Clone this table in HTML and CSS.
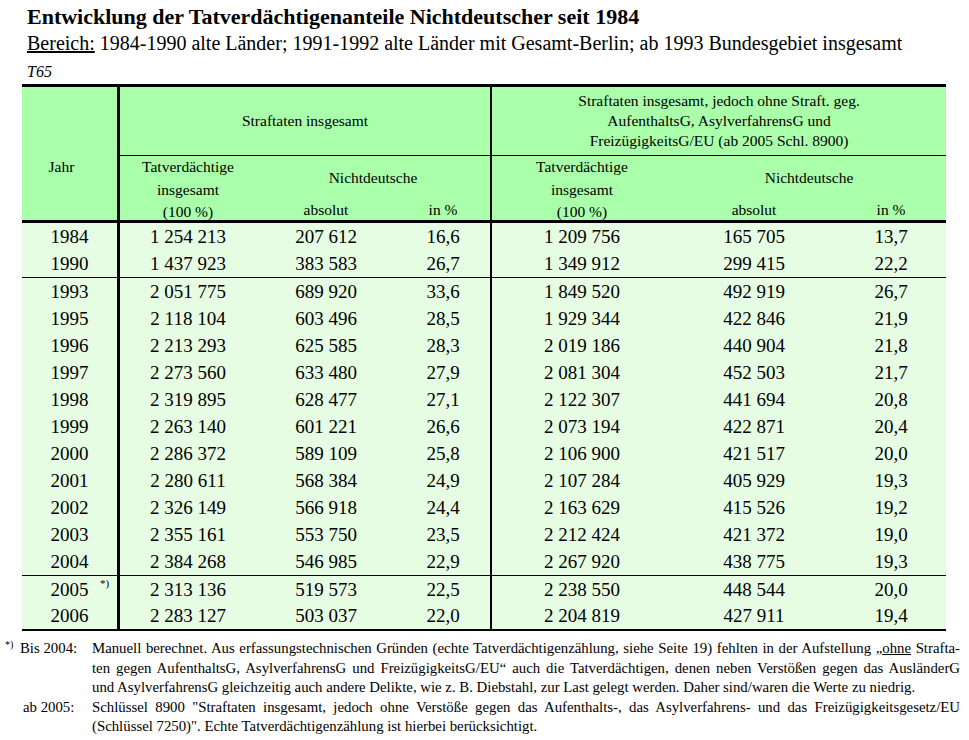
FILE: index.html
```html
<!DOCTYPE html>
<html lang="de">
<head>
<meta charset="utf-8">
<title>T65</title>
<link rel="stylesheet" href="styles.css">
</head>
<body>
<div class="page">
  <h1 class="title">Entwicklung der Tatverdächtigenanteile Nichtdeutscher seit 1984</h1>
  <p class="range"><span class="u">Bereich:</span> 1984-1990 alte Länder; 1991-1992 alte Länder mit Gesamt-Berlin; ab 1993 Bundesgebiet insgesamt</p>
  <p class="code">T65</p>
  <table class="data">
    <colgroup>
      <col class="c-year"><col class="c-tv1"><col class="c-abs1"><col class="c-pct1"><col class="c-tv2"><col class="c-abs2"><col class="c-pct2">
    </colgroup>
    <thead>
      <tr class="h1">
        <th rowspan="3" class="year-h yr">Jahr</th>
        <th colspan="3" class="grp sep">Straftaten insgesamt</th>
        <th colspan="3" class="grp grp3">Straftaten insgesamt, jedoch ohne Straft. geg.<br>AufenthaltsG, AsylverfahrensG und<br>FreizügigkeitsG/EU (ab 2005 Schl. 8900)</th>
      </tr>
      <tr class="h2">
        <th rowspan="2" class="tv"><div class="tvbox"><span>Tatverdächtige</span><span>insgesamt</span><span>(100 %)</span></div></th>
        <th colspan="2" class="nd sep">Nichtdeutsche</th>
        <th rowspan="2" class="tv"><div class="tvbox"><span>Tatverdächtige</span><span>insgesamt</span><span>(100 %)</span></div></th>
        <th colspan="2" class="nd">Nichtdeutsche</th>
      </tr>
      <tr class="h3">
        <th>absolut</th><th class="sep">in %</th><th>absolut</th><th>in %</th>
      </tr>
    </thead>
    <tbody>
      <tr><td class="yr">1984</td><td>1 254 213</td><td>207 612</td><td class="sep">16,6</td><td>1 209 756</td><td>165 705</td><td>13,7</td></tr>
      <tr class="end"><td class="yr">1990</td><td>1 437 923</td><td>383 583</td><td class="sep">26,7</td><td>1 349 912</td><td>299 415</td><td>22,2</td></tr>
      <tr><td class="yr">1993</td><td>2 051 775</td><td>689 920</td><td class="sep">33,6</td><td>1 849 520</td><td>492 919</td><td>26,7</td></tr>
      <tr><td class="yr">1995</td><td>2 118 104</td><td>603 496</td><td class="sep">28,5</td><td>1 929 344</td><td>422 846</td><td>21,9</td></tr>
      <tr><td class="yr">1996</td><td>2 213 293</td><td>625 585</td><td class="sep">28,3</td><td>2 019 186</td><td>440 904</td><td>21,8</td></tr>
      <tr><td class="yr">1997</td><td>2 273 560</td><td>633 480</td><td class="sep">27,9</td><td>2 081 304</td><td>452 503</td><td>21,7</td></tr>
      <tr><td class="yr">1998</td><td>2 319 895</td><td>628 477</td><td class="sep">27,1</td><td>2 122 307</td><td>441 694</td><td>20,8</td></tr>
      <tr><td class="yr">1999</td><td>2 263 140</td><td>601 221</td><td class="sep">26,6</td><td>2 073 194</td><td>422 871</td><td>20,4</td></tr>
      <tr><td class="yr">2000</td><td>2 286 372</td><td>589 109</td><td class="sep">25,8</td><td>2 106 900</td><td>421 517</td><td>20,0</td></tr>
      <tr><td class="yr">2001</td><td>2 280 611</td><td>568 384</td><td class="sep">24,9</td><td>2 107 284</td><td>405 929</td><td>19,3</td></tr>
      <tr><td class="yr">2002</td><td>2 326 149</td><td>566 918</td><td class="sep">24,4</td><td>2 163 629</td><td>415 526</td><td>19,2</td></tr>
      <tr><td class="yr">2003</td><td>2 355 161</td><td>553 750</td><td class="sep">23,5</td><td>2 212 424</td><td>421 372</td><td>19,0</td></tr>
      <tr class="end"><td class="yr">2004</td><td>2 384 268</td><td>546 985</td><td class="sep">22,9</td><td>2 267 920</td><td>438 775</td><td>19,3</td></tr>
      <tr><td class="yr star-cell">2005<sup class="star">*)</sup></td><td>2 313 136</td><td>519 573</td><td class="sep">22,5</td><td>2 238 550</td><td>448 544</td><td>20,0</td></tr>
      <tr class="last"><td class="yr">2006</td><td>2 283 127</td><td>503 037</td><td class="sep">22,0</td><td>2 204 819</td><td>427 911</td><td>19,4</td></tr>
    </tbody>
  </table>
  <div class="notes">
    <div class="mark"><sup>*)</sup></div>
    <div class="lbl">Bis 2004:</div>
    <div class="txt">
      <div class="jl">Manuell berechnet. Aus erfassungstechnischen Gründen (echte Tatverdächtigenzählung, siehe Seite 19) fehlten in der Aufstellung „<span class="u">ohne</span> Strafta-</div>
      <div class="jl">ten gegen AufenthaltsG, AsylverfahrensG und FreizügigkeitsG/EU“ auch die Tatverdächtigen, denen neben Verstößen gegen das AusländerG</div>
      <div>und AsylverfahrensG gleichzeitig auch andere Delikte, wie z. B. Diebstahl, zur Last gelegt werden. Daher sind/waren die Werte zu niedrig.</div>
    </div>
    <div class="mark"></div>
    <div class="lbl lbl2">ab 2005:</div>
    <div class="txt">
      <div class="jl">Schlüssel 8900 "Straftaten insgesamt, jedoch ohne Verstöße gegen das Aufenthalts-, das Asylverfahrens- und das Freizügigkeitsgesetz/EU</div>
      <div>(Schlüssel 7250)". Echte Tatverdächtigenzählung ist hierbei berücksichtigt.</div>
    </div>
  </div>
</div>
</body>
</html>
```

FILE: styles.css
```css
* { box-sizing: border-box; }
html, body { margin: 0; padding: 0; background: #ffffff; }
body { font-family: "Liberation Serif", "Times New Roman", serif; color: #000000; }
.page { width: 969px; height: 740px; overflow: hidden; }

.title { margin: 5px 0 0 27px; font-size: 22px; font-weight: 700; line-height: 24px; }
.range { margin: 3px 0 0 27px; font-size: 20px; line-height: 22px; }
.u { text-decoration: underline; }
.code { margin: 9px 0 0 27px; font-size: 16px; font-style: italic; line-height: 18px; }

.data { margin: 3px 0 0 22px; width: 924px; table-layout: fixed; border-collapse: separate; border-spacing: 0; }
.c-year { width: 98px; }
.c-tv1 { width: 136px; }
.c-abs1 { width: 140px; }
.c-pct1 { width: 96px; }
.c-tv2 { width: 180px; }
.c-abs2 { width: 164px; }
.c-pct2 { width: 110px; }

.data th, .data td { padding: 0; text-align: center; font-weight: normal; }
.data thead th { background: #aaffaa; font-size: 15.5px; line-height: 20px; }
.data tbody td { background: #e6fde3; font-size: 19px; line-height: 22px; }

.yr { border-right: 3px solid #000; }
.sep { border-right: 2px solid #000; }

.h1 { height: 72px; }
.h1 th { border-top: 3px solid #000; }
.h1 .grp { border-bottom: 1px solid #000; }
.grp3 { line-height: 20.5px; }
.year-h { vertical-align: top; padding: 70px 16px 0 0 !important; border-bottom: 3px solid #000; }

.h2 { height: 44px; }
.tv { border-bottom: 3px solid #000; vertical-align: top; }
.tvbox { height: 64px; padding-top: 3px; display: flex; flex-direction: column; justify-content: space-between; line-height: 16px; }
.nd { vertical-align: middle; }

.h3 { height: 23px; }
.h3 th { border-bottom: 3px solid #000; vertical-align: bottom; line-height: 18px; }

.data tbody tr { height: 27px; }
.data tbody tr.end { height: 28px; }
.data tbody tr.end td { border-bottom: 1px solid #000; }
.data tbody tr.last { height: 28px; }
.data tbody tr.last td { border-bottom: 2px solid #000; }

.star-cell { position: relative; }
.star { position: absolute; left: 78px; top: 1px; font-size: 11px; line-height: 12px; }

.notes { display: grid; grid-template-columns: 15px 72px 868px; margin: 8px 0 0 5px; font-size: 14.8px; line-height: 19.5px; }
.mark sup { font-size: 10px; vertical-align: top; line-height: 12px; }
.lbl2 { padding-left: 3px; }
.jl { text-align: justify; text-align-last: justify; }
```
